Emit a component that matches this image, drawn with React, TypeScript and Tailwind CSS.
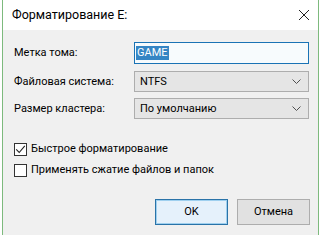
const font = { fontFamily: 'Roboto, "Liberation Sans", sans-serif' };

const Chevron = () => (
  <svg width="9" height="5" viewBox="0 0 9 5" fill="none" stroke="#505050" strokeWidth="1">
    <path d="M0.5 0.5 L4.5 4.5 L8.5 0.5" />
  </svg>
);

const Select = ({ value }: { value: string }) => (
  <div className="flex h-[21px] w-[175px] items-center justify-between border border-[#adadad] bg-[#e5e5e5] pl-[5px] pr-[7px]">
    <span>{value}</span>
    <Chevron />
  </div>
);

const Checkbox = ({ checked }: { checked?: boolean }) => (
  <span className="flex h-[13px] w-[13px] items-center justify-center border border-[#333] bg-white">
    {checked && (
      <svg width="11" height="11" viewBox="0 0 11 11" fill="none" stroke="#222" strokeWidth="1.1">
        <path d="M1.2 5.4 L4.2 8.5 L9.8 1.8" />
      </svg>
    )}
  </span>
);

const App = () => {
  return (
    <div className="h-[235px] w-[321px] bg-white px-[2px] text-[11px] leading-[16px] text-black" style={font}>
      <div className="flex h-full flex-col border-x border-[#7dba7d]">
        {/* title bar */}
        <div className="flex h-[30px] items-center justify-between bg-white pl-[9px] pr-[9px]">
          <span className="text-[12.5px]">Форматирование E:</span>
          <svg width="10" height="10" viewBox="0 0 10 10" stroke="#222" strokeWidth="1">
            <path d="M0 0 L10 10 M10 0 L0 10" />
          </svg>
        </div>

        <div className="flex flex-1 flex-col bg-[#f0f0f0] pl-[11px] pr-[8px] pt-[12px]">
          <div className="flex items-center">
            <span className="w-[120px]">Метка тома:</span>
            <div className="flex h-[22px] w-[175px] items-center border border-[#1a73b5] bg-[#f7fbfd] pl-[1px]">
              <span className="bg-[#3585c4] px-[1px] leading-[14px] text-white">GAME</span>
            </div>
          </div>

          <div className="mt-[7px] flex items-center">
            <span className="w-[120px]">Файловая система:</span>
            <Select value="NTFS" />
          </div>

          <div className="mt-[6px] flex items-center">
            <span className="w-[120px]">Размер кластера:</span>
            <Select value="По умолчанию" />
          </div>

          <label className="mt-[22px] flex items-center gap-[4px]">
            <Checkbox checked />
            <span>Быстрое форматирование</span>
          </label>

          <label className="mt-[5px] flex items-center gap-[4px]">
            <Checkbox />
            <span>Применять сжатие файлов и папок</span>
          </label>

          <div className="mt-[21px] flex justify-end gap-[9px]">
            <button className="h-[26px] w-[73px] border border-[#2a73a8] bg-[#e5f1fb] shadow-[inset_0_0_0_1px_#9fd0ef]">
              OK
            </button>
            <button className="h-[26px] w-[73px] border border-[#adadad] bg-[#e1e1e1]">Отмена</button>
          </div>
        </div>
      </div>
    </div>
  );
};

export default App;
